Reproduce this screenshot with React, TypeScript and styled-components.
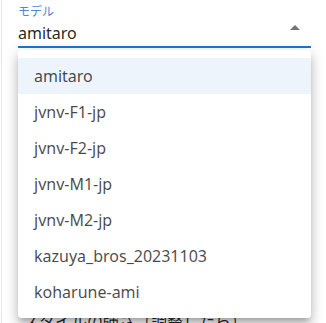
import React, { useState } from "react";
import styled, { createGlobalStyle } from "styled-components";

const GlobalStyle = createGlobalStyle`
  html, body {
    margin: 0;
    padding: 0;
    background: #ffffff;
  }
  body {
    font-family: "Noto Sans", "Noto Sans CJK JP", sans-serif;
    overflow: hidden;
  }
`;

const MODELS = [
  "amitaro",
  "jvnv-F1-jp",
  "jvnv-F2-jp",
  "jvnv-M1-jp",
  "jvnv-M2-jp",
  "kazuya_bros_20231103",
  "koharune-ami",
];

const Page = styled.div`
  margin-left: 1px;
  border-left: 1px solid #e6e6e6;
  padding: 0 16px 0 16px;
  height: 323px;
  box-sizing: border-box;
`;

const Field = styled.div`
  position: relative;
  width: 293px;
`;

const Label = styled.label`
  display: block;
  font-size: 12px;
  line-height: 16px;
  padding-top: 3px;
  margin-bottom: -1px;
  color: #4f86d6;
  font-family: "Noto Sans CJK JP", "Noto Sans", sans-serif;
`;

const SelectBox = styled.div`
  display: flex;
  align-items: center;
  justify-content: space-between;
  height: 28px;
  border-bottom: 2px solid #1976d2;
  color: rgba(0, 0, 0, 0.87);
  font-size: 16px;
  cursor: pointer;
`;

const Value = styled.span`
  line-height: 24px;
  padding-top: 2px;
`;

const Arrow = styled.svg`
  width: 24px;
  height: 24px;
  margin-right: 4px;
  margin-top: -8px;
  fill: #757575;
`;

const Menu = styled.ul`
  position: absolute;
  top: 50px;
  left: 0;
  width: 293px;
  margin: 0;
  padding: 8px 0;
  list-style: none;
  background: #ffffff;
  border-radius: 4px;
  box-shadow: 0px 5px 5px -3px rgba(0, 0, 0, 0.2),
    0px 8px 10px 1px rgba(0, 0, 0, 0.14), 0px 3px 14px 2px rgba(0, 0, 0, 0.12);
  z-index: 10;
`;

const Item = styled.li<{ $selected: boolean }>`
  height: 36px;
  display: flex;
  align-items: center;
  padding: 0 16px;
  font-size: 16px;
  color: rgba(0, 0, 0, 0.72);
  background: ${(props) =>
    props.$selected ? "rgba(25, 118, 210, 0.08)" : "transparent"};
`;

const Behind = styled.p`
  margin: 0;
  padding-top: 261px;
  padding-left: 5px;
  font-size: 16px;
  line-height: 24px;
  color: rgba(0, 0, 0, 0.87);
  white-space: nowrap;
`;

export default function App() {
  const [model, setModel] = useState("amitaro");

  return (
    <>
      <GlobalStyle />
      <Page>
        <Field>
          <Label>モデル</Label>
          <SelectBox>
            <Value>{model}</Value>
            <Arrow viewBox="0 0 24 24">
              <path d="M7 14l5-5 5 5z" />
            </Arrow>
          </SelectBox>
          <Menu>
            {MODELS.map((name) => (
              <Item
                key={name}
                $selected={name === model}
                onClick={() => setModel(name)}
              >
                {name}
              </Item>
            ))}
          </Menu>
          <Behind>スタイルの強さ（調整したら）</Behind>
        </Field>
      </Page>
    </>
  );
}
